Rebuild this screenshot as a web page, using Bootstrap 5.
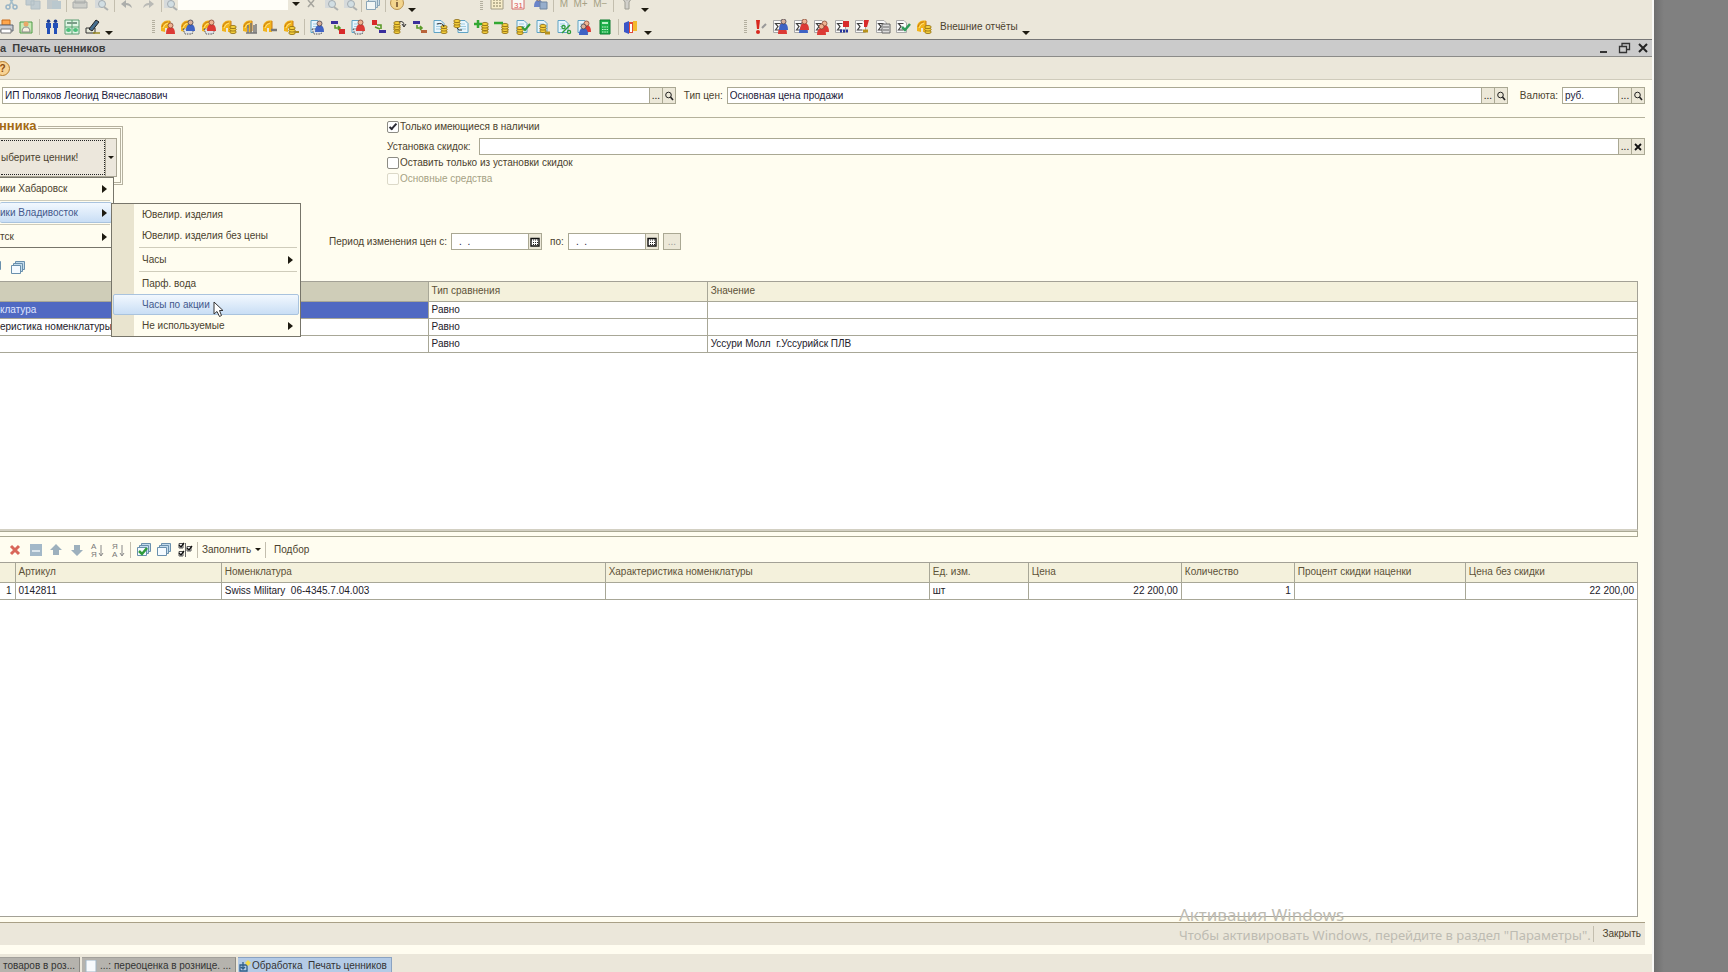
<!DOCTYPE html>
<html lang="ru">
<head>
<meta charset="utf-8">
<meta name="viewport" content="width=device-width, initial-scale=1">
<title>Печать ценников</title>
<link href="https://cdn.jsdelivr.net/npm/bootstrap@5.3.0/dist/css/bootstrap.min.css" rel="stylesheet">
<style>
:root{--cream:#fffdf0;--panel:#ebe7da;--line:#aaa893;--ink:#4b422e}
body{font-family:"Liberation Sans",Arial,sans-serif;font-size:10px;line-height:16px;color:var(--ink);background:#808080}
button,input{font:inherit;color:inherit}
.app{min-height:100vh;overflow:hidden}
.work{background:var(--cream);border-right:2px solid #f8f8f6;min-width:0}
.desk{flex:0 0 74px;background:linear-gradient(90deg,#6f6f6f,#808080 10px)}
.tb{background:var(--panel)}
.tb-top{height:14px}
.tb-top .ico{opacity:.75}
.tb-main{height:25px}
.tb-top .grp{height:8px;line-height:8px}
.grp{display:flex;align-items:center;justify-content:space-between;flex:none}
.g-edit{width:162px}.g-find{width:124px}.g-calc{width:169px;margin-left:64px}
.g-ops{width:115px;margin-left:-2px}.g-docs{width:500px;margin-left:39px}.g-rep{width:188px;margin-left:92px}
.g-rows{width:186px;margin-left:7px}
.ico{width:16px;height:16px;display:block;flex:none}
.find-ico{margin-top:-4px}
.tool{border:0;background:none;padding:0;line-height:16px;flex:none;display:block}
.vsep{width:1px;height:16px;background:#c3beae;flex:none}
.grip{width:3px;height:14px;background:repeating-linear-gradient(#b3af9f 0 1px,transparent 1px 2px);flex:none}
.caret{width:0;height:0;border:4px solid transparent;border-top-color:#1d1a10;border-bottom:0;flex:none}
.caret-s{border-width:3px 3px 0}
.low{margin-top:12px}
.find-box{width:110px;height:10px;border:0;background:#fffef8;padding:0 4px}
.titlebar{height:18px;background:#cbcbcb;border-top:1px solid #777;border-bottom:1px solid #8b8b88;font-size:11px;font-weight:bold;color:#3c3c3c}
.subbar{height:23px;border-bottom:1px solid #cfcbbb}
.help{width:15px;height:15px;border-radius:50%;border:1px solid #b77d2c;background:#f8d394;color:#8a4a10;font-weight:bold;line-height:13px;margin-left:-5px}
.heads{padding:7px 7px 0 2px}
.fld{height:17px;border:1px solid var(--line);background:#fff;min-width:0;padding:0 2px;color:#20203a;border-radius:0}
.f-org{flex:646 1 0}.f-type{flex:754 1 0}.f-cur{width:57px}
.fbtn{width:13px;height:17px;border:1px solid var(--line);border-left:0;background:#ece8d8;padding:0;color:#111;display:flex;align-items:center;justify-content:center;flex:none;line-height:12px}
.fbtn svg{width:10px;height:10px}
.fbtn.alone{width:18px;color:#999;border-left:1px solid var(--line)}
.rule{height:1px;background:#b5b29c;margin:13px 7px 0 0}
.opts{height:115px}
.rightcol{padding:1px 7px 0 0}
.leftcol{width:387px;flex:none;position:relative}
.frame{position:relative;width:123px;height:59px;margin-top:8px;border:3px double #b5b19f;border-left:0}
.frame-title{position:absolute;top:-11px;left:-1px;background:var(--cream);color:#a36a14;font-weight:bold;font-size:13px;padding-right:2px}
.pick{position:absolute;left:0;top:9px;width:106px;height:39px;background:#ece7dc;border:1px solid #a9a594;border-left:0;padding:1px}
.pick span{display:block;height:35px;width:104px;border:1px dotted #222;border-left:0;text-align:left;line-height:33px}
.drop{position:absolute;left:106px;top:9px;width:11px;height:39px;background:#ece7dc;border:1px solid #a9a594;border-left:0;padding:0}
.menu{position:absolute;background:var(--cream);border:1px solid #77756a;z-index:5;padding:0 1px}
.menu-a{left:0;top:59px;width:114px;border-left:0;padding-left:0}
.menu-b{left:111px;top:85px;width:190px;background:linear-gradient(90deg,#e9e4cf 22px,var(--cream) 22px)}
.mi{display:flex;align-items:center;justify-content:space-between;width:100%;border:1px solid transparent;background:none;height:21px;padding:0 5px 0 28px;text-align:left;border-radius:2px}
.menu-a .mi{padding:0 4px 0 0;border-left:0}
.mi.hot{background:linear-gradient(#f2f8fe,#c9def5);border-color:#a9c3de;color:#44598c}
.mi i{width:0;height:0;border:4px solid transparent;border-left:5px solid #1d1a10;border-right:0}
.msep{height:1px;background:#cfccbb;margin:1px 2px 1px 26px}
.menu-a .msep{margin-left:0}
.tick{appearance:none;width:12px;height:12px;border:1px solid #8d8c84;background:#fff;border-radius:2px;margin:0;display:grid;place-items:center;flex:none}
.tick:checked::after{content:"";width:8px;height:4px;border:solid #2b2b33;border-width:0 0 2px 2px;rotate:-48deg;margin-top:-3px}
.tick:disabled{border-color:#dcd9c8;background:#fffef6}
.opt{display:flex;align-items:center;gap:1px;height:16px}
.disc-row{margin-top:3px}
.dim{color:#a5a184}
.period{padding-left:329px}
.date{width:78px;padding-left:7px}
.views{height:31px}
.views .ico:first-child{margin-left:-14px}
.grid-wrap{margin-right:14px;border:1px solid #a3a196;border-left:0;background:#fff}
.grid1{height:250px;border-bottom:2px solid #d3d0c3}
.gridt{width:100%;table-layout:fixed;border-collapse:collapse;margin:0;color:#22202a}
.gridt th,.gridt td{border:1px solid #a8a797;border-top:0;padding:0 3px;height:17px;line-height:16px;white-space:nowrap;overflow:hidden}
.gridt tr>:first-child{border-left:0;padding-left:0}
.gridt tr>:last-child{border-right:0}
.gridt th{background:#f4f1dc;color:#5d5238;font-weight:normal;height:19px;line-height:18px}
.gridt th.cur{background:#cfcdb8}
.gridt td.sel{background:#5069c2;color:#dfe4ff}
.c-f{width:26.15%}.c-t{width:17.05%}
.k-n{width:15px}.k-a{width:12.6%}.k-m{width:23.45%}.k-h{width:19.8%}.k-e{width:6.05%}.k-p{width:9.35%}.k-q{width:6.9%}.k-d{width:10.45%}
.split{height:6px;margin-right:14px;border:1px solid var(--line);border-left:0}
.cmds{height:25px}
.footbar{height:23px;margin:5px 7px 0 0;border-top:1px solid #a9a086;background:var(--panel)}
.tasks{height:18px;margin-top:9px;background:var(--panel);padding-top:3px}
.task{height:16px;border:0;background:#b5b3ad;padding:0 4px 0 3px;display:flex;align-items:center;gap:3px;border-right:1px solid #8e8c86;border-top:1px solid #a2a09a;color:#333;margin-right:2px;white-space:nowrap}
.task.on{background:#b4cbe6;border-color:#8aa3c2;gap:1px;padding-left:1px}
.task svg{width:12px;height:12px}
.mark-win{position:absolute;right:64px;bottom:27px;width:409px;font-family:"Noto Sans","Open Sans",sans-serif;font-size:13px;line-height:20px;color:#bdbbb2;pointer-events:none;white-space:nowrap}
.mark-win b{display:block;font-size:17px;font-weight:normal}
.cursor{position:absolute;left:213px;top:183px;width:12px;height:17px;z-index:6}
</style>
</head>
<body>
<svg width="0" height="0" class="position-absolute" aria-hidden="true">
  <defs>
    <symbol id="gold" viewBox="0 0 16 16"><path d="M1 12V7Q2 2 7 1.500H10V13H7V9H5V13Z" fill="#f2b41c"/><path d="M2 8Q3 3 8 3M10 2V12" stroke="#c97a12" fill="none"/><path d="M3 9Q4 5 8 4" stroke="#ffe680" fill="none"/></symbol>
    <symbol id="doc" viewBox="0 0 16 16"><path d="M2 1.500H9L12 4.500V13.500H2Z" fill="#e9f6fd" stroke="#5fa3c4"/><path d="M4 5H9M4 7.500H10M4 10H10" stroke="#9fcbe0"/></symbol>
    <symbol id="sig" viewBox="0 0 16 16"><path d="M1.500 1.500H9L11.500 4V13.500H1.500Z" fill="#fafafa" stroke="#a8a8a8"/><path d="M8.500 4.500H3.500L6 7.500L3.500 11H8.500" fill="none" stroke="#444" stroke-width="1.200"/></symbol>
    <symbol id="coins" viewBox="0 0 16 16"><g fill="#f5cf3c" stroke="#8b6910" stroke-width=".8"><ellipse cx="8" cy="13" rx="3.200" ry="1.600"/><ellipse cx="8" cy="10.500" rx="3.200" ry="1.600"/><ellipse cx="8" cy="8" rx="3.200" ry="1.600"/></g></symbol>
    <symbol id="manr" viewBox="0 0 16 16"><path d="M6 15Q6 8 10.500 8T15 15Z" fill="#dc3a35"/><circle cx="10.500" cy="6.500" r="2.500" fill="#efb392" stroke="#7a3a2a" stroke-width=".7"/></symbol>
    <symbol id="manb" viewBox="0 0 16 16"><path d="M6 14Q6 7 10.500 7T15 14Z" fill="#3f63c4"/><circle cx="10.500" cy="5.500" r="2.500" fill="#d9b09a" stroke="#334" stroke-width=".7"/></symbol>
    <symbol id="basket" viewBox="0 0 16 16"><path d="M3 10H14L12 15H5Z" fill="#dfe3e8" stroke="#555" stroke-dasharray="1.500 1"/></symbol>
    <symbol id="flow" viewBox="0 0 16 16"><path d="M1 2H8V5H1Z" fill="#3b2f9c"/><path d="M5 6V9H10M8 7L10 9L8 11" fill="none" stroke="#5a9a28" stroke-width="1.600"/></symbol>
    <symbol id="find" viewBox="0 0 10 10"><circle cx="4.500" cy="4" r="2.800" fill="none" stroke="#222"/><path d="M6.500 6L9 9" stroke="#222" stroke-width="1.600"/></symbol>
    <symbol id="cal" viewBox="0 0 10 10"><path d="M1 1.500H9V9H1Z" fill="#fff" stroke="#111" stroke-width="1.400"/><path d="M1 3H9M3 5.500H8M3 7.500H8" stroke="#222" stroke-dasharray="1 1"/></symbol>
    <symbol id="stack" viewBox="0 0 16 16"><g fill="#c3dcec" stroke="#6a90ad"><path d="M5.500 1.500H14.500V9.500H5.500Z"/><path d="M3.500 3.500H12.500V11.500H3.500Z"/><path d="M1.500 5.500H10.500V13.500H1.500Z" fill="#f5fbff"/></g></symbol>
    <symbol id="loupe" viewBox="0 0 16 16"><path d="M2 2H10V12H2Z" fill="#cfd6dc"/><circle cx="9" cy="8" r="3.500" fill="#c9dbe6" stroke="#8d9aa4"/><path d="M11 11L15 14" stroke="#9aa0a4" stroke-width="2"/></symbol>
  </defs>
</svg>

<div class="app d-flex">
<main class="work flex-grow-1 d-flex flex-column position-relative">

  <!-- Standard toolbar, scrolled partly above the window edge -->
  <div class="tb tb-top d-flex align-items-start">
    <div class="grp g-edit">
      <svg class="ico ms-1" viewBox="0 0 16 16"><path d="M4 0L10 10M11 0L5 10" stroke="#8db0c4" stroke-width="1.500"/><circle cx="4" cy="11" r="2" fill="none" stroke="#7fa5c0" stroke-width="1.500"/><circle cx="11" cy="11" r="2" fill="none" stroke="#7fa5c0" stroke-width="1.500"/></svg>
      <svg class="ico" viewBox="0 0 16 16"><path d="M1 1H9V9H1ZM6 5H15V13H6Z" fill="#b3c3ce" stroke="#9fb1bd"/></svg>
      <svg class="ico" viewBox="0 0 16 16"><path d="M1 2H12V13H1Z" fill="#b5c0c6"/><path d="M6 5H15V13H6Z" fill="#aabecb"/></svg>
      <span class="vsep"></span>
      <svg class="ico" viewBox="0 0 16 16"><path d="M3 3H13V7H3ZM1 6H15V12H1Z" fill="#c4c6c4" stroke="#93999b"/></svg>
      <svg class="ico"><use href="#loupe"/></svg>
      <span class="vsep"></span>
      <svg class="ico" viewBox="0 0 16 16"><path d="M2 8L7 4V7Q12 7 13 12Q10 9 7 9V12Z" fill="#979b9c"/></svg>
      <svg class="ico" viewBox="0 0 16 16"><path d="M14 8L9 4V7Q4 7 3 12Q6 9 9 9V12Z" fill="#a9abaa"/></svg>
      <span class="vsep"></span>
    </div>
    <svg class="ico find-ico"><use href="#loupe"/></svg>
    <input class="find-box" aria-label="Поиск">
    <div class="grp g-find ms-1">
      <span class="caret"></span>
      <svg class="ico" viewBox="0 0 16 16"><path d="M5 4L11 11M11 4L5 11" stroke="#8f8f8a" stroke-width="1.500"/></svg>
      <svg class="ico"><use href="#loupe"/></svg>
      <svg class="ico"><use href="#loupe"/></svg>
      <span class="vsep"></span>
      <svg class="ico"><use href="#stack"/></svg>
      <span class="vsep"></span>
      <svg class="ico" viewBox="0 0 16 16"><circle cx="8" cy="7" r="6.500" fill="#f6cf74" stroke="#a8761f"/><path d="M8 3V4.500M8 6V11" stroke="#6c4410" stroke-width="2"/></svg>
      <span class="caret low"></span>
    </div>
    <div class="grp g-calc">
      <span class="grip"></span>
      <svg class="ico" viewBox="0 0 16 16"><path d="M2 1H14V13H2Z" fill="#fbf0c4" stroke="#8a8468"/><path d="M4 4H12M4 7H12M4 10H12" stroke="#5d5430" stroke-dasharray="2 1"/></svg>
      <svg class="ico" viewBox="0 0 16 16"><path d="M2 0H14V13H2Z" fill="#fff" stroke="#c44"/><text x="4" y="12" font-size="8" fill="#d22">31</text></svg>
      <svg class="ico" viewBox="0 0 16 16"><use href="#manb" x="-4" y="-3"/><path d="M8 6H15V13H8Z" fill="#7a9cc8" stroke="#47668f"/></svg>
      <span class="vsep"></span>
      <span class="dim">M</span><span class="dim">M+</span><span class="dim">M−</span>
      <span class="vsep"></span>
      <svg class="ico" viewBox="0 0 16 16"><path d="M3 2L6 6V13H10V6L13 2L8 4Z" fill="#c9c9c6" stroke="#85857f"/></svg>
      <span class="caret low"></span>
    </div>
  </div>

  <!-- Main toolbar -->
  <div class="tb tb-main d-flex align-items-center">
    <div class="grp g-ops">
      <svg class="ico" viewBox="0 0 16 16"><path d="M4 1H12V6H4Z" fill="#ffa64b" stroke="#c86a1a"/><path d="M1 6H15V12H1Z" fill="#c9cdd4" stroke="#5d6470"/><path d="M3 10H13V14H3Z" fill="#fff" stroke="#777"/></svg>
      <svg class="ico" viewBox="0 0 16 16"><path d="M2 3H14V14H2Z" fill="#c9eab8" stroke="#4f9a46"/><circle cx="8" cy="5" r="2.500" fill="#e9a868"/><path d="M4 13Q4 8 8 8T12 13Z" fill="#f5f0e0" stroke="#888"/></svg>
      <span class="vsep"></span>
      <svg class="ico" viewBox="0 0 16 16"><path d="M2 4H7V9H6V15H3V9H2ZM9 4H14V9H13V15H10V9H9Z" fill="#2350b8"/><circle cx="4.500" cy="2.300" r="1.800" fill="#1c3c90"/><circle cx="11.500" cy="2.300" r="1.800" fill="#1c3c90"/></svg>
      <svg class="ico" viewBox="0 0 16 16"><path d="M1 1H15V15H1Z" fill="#dff5e4" stroke="#5a9c72"/><path d="M1 8H15M8 1V15" stroke="#55a06c"/><path d="M3 3H13V5H3Z" fill="#7a9c88"/><ellipse cx="4.500" cy="11" rx="2.500" ry="2" fill="#4cc07a"/><ellipse cx="11.500" cy="11" rx="2.500" ry="2" fill="#4cc07a"/></svg>
      <svg class="ico" viewBox="0 0 16 16"><path d="M1 9H10V14H1Z" fill="#e5e8d8" stroke="#333"/><path d="M4 10L11 1L14 3L7 12Z" fill="#476f8f" stroke="#222"/><path d="M8 14H15" stroke="#998a20" stroke-width="1.500"/></svg>
      <span class="caret low"></span>
    </div>
    <div class="grp g-docs">
      <span class="grip"></span>
      <svg class="ico"><use href="#gold"/><use href="#manr"/></svg>
      <svg class="ico"><use href="#gold"/><use href="#basket"/><use href="#manb" y="-2"/></svg>
      <svg class="ico"><use href="#gold"/><use href="#basket"/><use href="#manr" y="-3"/></svg>
      <svg class="ico"><use href="#gold"/><use href="#coins" x="4"/></svg>
      <svg class="ico" viewBox="0 0 16 16"><use href="#gold"/><path d="M6 6V14M9 4V14M12 6V14M14 5V14M4 14H15" stroke="#777" stroke-width="1.500"/></svg>
      <svg class="ico" viewBox="0 0 16 16"><use href="#gold"/><path d="M9 11H15" stroke="#777" stroke-width="2.500"/></svg>
      <svg class="ico" viewBox="0 0 16 16"><use href="#gold"/><use href="#coins" x="1" y="1"/><path d="M12 13H16" stroke="#a88a20" stroke-width="2"/></svg>
      <span class="vsep"></span>
      <svg class="ico"><use href="#doc"/><use href="#basket"/><use href="#manb" y="-1"/></svg>
      <svg class="ico" viewBox="0 0 16 16"><use href="#flow"/><path d="M9 10H15V15H9Z" fill="#d82a2a"/></svg>
      <svg class="ico"><use href="#doc"/><use href="#basket"/><use href="#manr" y="-3"/></svg>
      <svg class="ico" viewBox="0 0 16 16"><path d="M1 1H6V6H1Z" fill="#d82a2a"/><path d="M6 6H10V10M4 8L9 10" stroke="#5a9a28" stroke-width="1.600" fill="none"/><path d="M8 11H15V14H8Z" fill="#3b2f9c"/></svg>
      <svg class="ico" viewBox="0 0 16 16"><use href="#coins" x="-2"/><use href="#coins" x="-2" y="-4"/><path d="M8 3Q13 1 13 7M11 5L13 8L15 5" fill="none" stroke="#333"/></svg>
      <svg class="ico" viewBox="0 0 16 16"><use href="#flow"/><path d="M9 11H15V14H9Z" fill="#b8643a"/></svg>
      <svg class="ico" viewBox="0 0 16 16"><use href="#doc"/><use href="#coins" x="4"/><path d="M5 5Q11 3 12 8" fill="none" stroke="#333"/></svg>
      <svg class="ico" viewBox="0 0 16 16"><use href="#doc" x="3"/><use href="#coins" x="-4" y="-6"/><path d="M4 9Q5 12 9 11" fill="none" stroke="#333"/></svg>
      <svg class="ico" viewBox="0 0 16 16"><use href="#coins" x="3"/><use href="#coins" x="3" y="-3"/><path d="M4 1V9M0 5H8" stroke="#32a832" stroke-width="2.500"/></svg>
      <svg class="ico" viewBox="0 0 16 16"><use href="#coins" x="3"/><use href="#coins" x="3" y="-2"/><path d="M0 4H9" stroke="#32a832" stroke-width="2.500"/></svg>
      <svg class="ico" viewBox="0 0 16 16"><use href="#doc"/><use href="#coins" x="-3" y="1"/><path d="M7 8L10 11L15 5" fill="none" stroke="#2f9c3a" stroke-width="2"/></svg>
      <svg class="ico" viewBox="0 0 16 16"><use href="#doc"/><use href="#coins" y="-1"/><path d="M10 14H15" stroke="#b8921c" stroke-width="3"/></svg>
      <svg class="ico" viewBox="0 0 16 16"><use href="#doc"/><path d="M6 14L14 6" stroke="#2f9c3a" stroke-width="1.500"/><circle cx="7.500" cy="8" r="1.600" fill="none" stroke="#2f9c3a" stroke-width="1.300"/><circle cx="13" cy="13" r="1.600" fill="none" stroke="#2f9c3a" stroke-width="1.300"/></svg>
      <svg class="ico"><use href="#doc"/><use href="#manr" y="-2"/><use href="#manb" x="-3" y="2"/></svg>
      <svg class="ico" viewBox="0 0 16 16"><path d="M3 1H13V15H3Z" fill="#1fb04a" stroke="#0f7a30"/><path d="M5 3H11V5H5Z" fill="#b8f0c4"/><path d="M5 8H11M5 10.500H11M5 13H11" stroke="#c9f5d2" stroke-dasharray="1.500 .8"/></svg>
      <span class="vsep"></span>
      <svg class="ico" viewBox="0 0 16 16"><path d="M1 4L6 2V15L1 13Z" fill="#3a55c8"/><path d="M6 3H10V14H6Z" fill="#e04a3a"/><path d="M10 2H14V12H10Z" fill="#f4b92c"/><path d="M7 5H9V13H7Z" fill="#fff"/></svg>
      <span class="caret low"></span>
    </div>
    <div class="grp g-rep">
      <span class="grip"></span>
      <svg class="ico" viewBox="0 0 16 16"><path d="M4 1H8L7 10H5Z" fill="#d8281e"/><circle cx="6" cy="13" r="2" fill="#d8281e"/><path d="M10 9L14 5" stroke="#999" stroke-width="2"/></svg>
      <svg class="ico"><use href="#sig"/><use href="#manr"/><use href="#manb" x="1" y="-3"/></svg>
      <svg class="ico"><use href="#sig"/><use href="#manb"/><use href="#manr" x="1" y="-4"/></svg>
      <svg class="ico"><use href="#sig"/><use href="#manr" x="1" y="-2"/><use href="#manr" x="-2" y="1"/></svg>
      <svg class="ico" viewBox="0 0 16 16"><use href="#sig"/><path d="M9 2H15V8H9Z" fill="#d82a2a"/><path d="M6 12H15" stroke="#26349c" stroke-width="3" stroke-dasharray="2 1"/></svg>
      <svg class="ico" viewBox="0 0 16 16"><use href="#sig"/><path d="M10 1H15L13 8H10Z" fill="#d82a2a"/><path d="M9 12H14" stroke="#b8921c" stroke-width="3"/></svg>
      <svg class="ico" viewBox="0 0 16 16"><use href="#sig"/><path d="M7 5H15V14H7Z" fill="#ddd" stroke="#666"/><path d="M8 8H14M8 11H14" stroke="#666"/></svg>
      <svg class="ico" viewBox="0 0 16 16"><use href="#sig"/><path d="M7 8L10 11L15 5" fill="none" stroke="#2f9c5a" stroke-width="2.500"/></svg>
      <svg class="ico"><use href="#gold"/><use href="#coins" x="4"/></svg>
    </div>
    <button class="tool ms-2">Внешние отчёты</button>
    <span class="caret low ms-1"></span>
  </div>

  <div class="titlebar d-flex align-items-center justify-content-between">
    <span style="white-space:pre">а  Печать ценников</span>
    <span class="d-flex gap-1">
      <button class="tool" aria-label="Свернуть"><svg class="ico" viewBox="0 0 16 16"><path d="M4 12H11" stroke="#333" stroke-width="2"/></svg></button>
      <button class="tool" aria-label="Восстановить"><svg class="ico" viewBox="0 0 16 16"><path d="M6 6V3.500H13.500V9.500H11M3.500 6.500H10.500V12.500H3.500Z" fill="none" stroke="#333" stroke-width="1.300"/></svg></button>
      <button class="tool" aria-label="Закрыть окно"><svg class="ico" viewBox="0 0 16 16"><path d="M3 4L11 12M11 4L3 12" stroke="#222" stroke-width="2"/></svg></button>
    </span>
  </div>
  <div class="tb subbar d-flex align-items-center"><button class="help p-0" aria-label="Справка">?</button></div>

  <!-- Header fields -->
  <div class="heads d-flex align-items-center">
    <input class="fld f-org" value="ИП Поляков Леонид Вячеславович" aria-label="Организация">
    <button class="fbtn">...</button><button class="fbtn" aria-label="Найти"><svg><use href="#find"/></svg></button>
    <label for="ptype" class="ms-2 me-1">Тип цен:</label>
    <input id="ptype" class="fld f-type" value="Основная цена продажи">
    <button class="fbtn">...</button><button class="fbtn" aria-label="Найти"><svg><use href="#find"/></svg></button>
    <label for="cur" class="ms-2 me-1 ps-1">Валюта:</label>
    <input id="cur" class="fld f-cur" value="руб.">
    <button class="fbtn">...</button><button class="fbtn" aria-label="Найти"><svg><use href="#find"/></svg></button>
  </div>
  <div class="rule"></div>

  <div class="opts d-flex">
    <div class="leftcol">
      <div class="frame">
        <span class="frame-title">нника</span>
        <button class="pick"><span>ыберите ценник!</span></button>
        <button class="drop d-flex align-items-center justify-content-center" aria-label="Список"><span class="caret caret-s"></span></button>
      </div>
      <div class="menu menu-a">
        <button class="mi">ики Хабаровск<i></i></button>
        <div class="msep"></div>
        <button class="mi hot">ики Владивосток<i></i></button>
        <div class="msep"></div>
        <button class="mi">тск<i></i></button>
      </div>
      <div class="menu menu-b">
        <button class="mi">Ювелир. изделия</button>
        <button class="mi">Ювелир. изделия без цены</button>
        <div class="msep"></div>
        <button class="mi">Часы<i></i></button>
        <div class="msep"></div>
        <button class="mi">Парф. вода</button>
        <button class="mi hot">Часы по акции</button>
        <button class="mi">Не используемые<i></i></button>
      </div>
      <svg class="cursor" viewBox="0 0 12 17"><path d="M1 1V13L4 10.500L6.500 15.500L8.500 14.500L6.500 9.500H10Z" fill="#fff" stroke="#333"/></svg>
    </div>
    <div class="rightcol flex-grow-1">
      <label class="opt"><input type="checkbox" class="tick" checked>Только имеющиеся в наличии</label>
      <div class="disc-row d-flex align-items-center">
        <label for="disc" class="me-2">Установка скидок:</label>
        <input id="disc" class="fld flex-grow-1">
        <button class="fbtn">...</button><button class="fbtn" aria-label="Очистить"><svg viewBox="0 0 10 10"><path d="M2 2L8 8M8 2L2 8" stroke="#111" stroke-width="1.800"/></svg></button>
      </div>
      <label class="opt"><input type="checkbox" class="tick">Оставить только из установки скидок</label>
      <label class="opt dim"><input type="checkbox" class="tick" disabled>Основные средства</label>
    </div>
  </div>

  <div class="period d-flex align-items-center">
    <label for="d1" class="me-1">Период изменения цен с:</label>
    <input id="d1" class="fld date" value=".  ."><button class="fbtn" aria-label="Календарь"><svg><use href="#cal"/></svg></button>
    <label for="d2" class="ms-2 me-1">по:</label>
    <input id="d2" class="fld date" value=".  ."><button class="fbtn" aria-label="Календарь"><svg><use href="#cal"/></svg></button>
    <button class="fbtn alone ms-1">...</button>
  </div>

  <div class="views d-flex align-items-center gap-2 pt-1">
    <svg class="ico"><use href="#stack"/></svg>
    <svg class="ico"><use href="#stack"/></svg>
  </div>

  <!-- Filter table -->
  <div class="grid-wrap grid1">
    <table class="gridt">
      <colgroup><col class="c-f"><col class="c-t"><col></colgroup>
      <thead><tr><th class="cur"></th><th>Тип сравнения</th><th>Значение</th></tr></thead>
      <tbody>
        <tr><td class="sel">клатура</td><td>Равно</td><td></td></tr>
        <tr><td>еристика номенклатуры</td><td>Равно</td><td></td></tr>
        <tr><td></td><td>Равно</td><td>Уссури Молл&nbsp; г.Уссурийск ПЛВ</td></tr>
      </tbody>
    </table>
  </div>
  <div class="split"></div>

  <div class="cmds d-flex align-items-center">
    <div class="grp g-rows">
      <svg class="ico" viewBox="0 0 16 16"><path d="M4 4L12 12M12 4L4 12" stroke="#d8665a" stroke-width="3"/></svg>
      <svg class="ico" viewBox="0 0 16 16"><path d="M2 2H14V14H2Z" fill="#a3b8c8"/><path d="M4 9H12" stroke="#dbe5ec" stroke-width="2"/></svg>
      <svg class="ico" viewBox="0 0 16 16"><path d="M8 2L14 8H11V13H5V8H2Z" fill="#9db0bd"/></svg>
      <svg class="ico" viewBox="0 0 16 16"><path d="M8 14L14 8H11V3H5V8H2Z" fill="#9db0bd"/></svg>
      <svg class="ico" viewBox="0 0 16 16"><text x="2" y="7" font-size="8" fill="#777">А</text><text x="2" y="15" font-size="8" fill="#777">Я</text><path d="M12 3V13M10 11L12 14L14 11" fill="none" stroke="#888"/></svg>
      <svg class="ico" viewBox="0 0 16 16"><text x="2" y="7" font-size="8" fill="#777">Я</text><text x="2" y="15" font-size="8" fill="#777">А</text><path d="M12 3V13M10 11L12 14L14 11" fill="none" stroke="#888"/></svg>
      <span class="vsep"></span>
      <svg class="ico" viewBox="0 0 16 16"><use href="#stack"/><path d="M3 9L6 12L11 6" fill="none" stroke="#2f9c3a" stroke-width="2.500"/></svg>
      <svg class="ico"><use href="#stack"/></svg>
      <svg class="ico" viewBox="0 0 16 16"><path d="M2 1.500H6V6H2ZM2 9.500H6V14H2ZM10 4.500H14V9H10Z" fill="#fff" stroke="#555"/><path d="M8.500 1V15" stroke="#666"/><path d="M2 3L4 5L7 1M2 11L4 13L7 9M10 6L12 8L15 4" fill="none" stroke="#111" stroke-width="1.300"/></svg>
    </div>
    <span class="vsep ms-1"></span>
    <button class="tool ms-1 d-flex align-items-center gap-1">Заполнить<span class="caret caret-s"></span></button>
    <span class="vsep mx-1"></span>
    <button class="tool ms-1">Подбор</button>
  </div>

  <!-- Goods table -->
  <div class="grid-wrap flex-grow-1">
    <table class="gridt">
      <colgroup><col class="k-n"><col class="k-a"><col class="k-m"><col class="k-h"><col class="k-e"><col class="k-p"><col class="k-q"><col class="k-d"><col></colgroup>
      <thead><tr><th></th><th>Артикул</th><th>Номенклатура</th><th>Характеристика номенклатуры</th><th>Ед. изм.</th><th>Цена</th><th>Количество</th><th>Процент скидки наценки</th><th>Цена без скидки</th></tr></thead>
      <tbody><tr><td class="text-end">1</td><td>0142811</td><td>Swiss Military&nbsp; 06-4345.7.04.003</td><td></td><td>шт</td><td class="text-end">22 200,00</td><td class="text-end">1</td><td></td><td class="text-end">22 200,00</td></tr></tbody>
    </table>
  </div>

  <div class="footbar d-flex align-items-center justify-content-end">
    <span class="vsep me-1"></span><button class="tool px-1">Закрыть</button>
  </div>

  <div class="tasks d-flex overflow-hidden">
    <button class="task">товаров в роз...</button>
    <button class="task"><svg viewBox="0 0 12 12"><path d="M1 0H11V12H1Z" fill="#f7fafc" stroke="#9fb4c4"/></svg>...: переоценка в рознице. ...</button>
    <button class="task on"><svg viewBox="0 0 12 12"><path d="M1 5H8V11H1ZM4 2V9M2 7L4 9L6 7" fill="none" stroke="#2f5f88" stroke-width="1.300"/><path d="M9 0L12 3L9 6L6 3Z" fill="#f1dc4c"/></svg>Обработка&nbsp; Печать ценников</button>
  </div>

  <div class="mark-win"><b>Активация Windows</b>Чтобы активировать Windows, перейдите в раздел "Параметры".</div>
</main>
<aside class="desk" aria-hidden="true"></aside>
</div>
<script src="https://cdn.jsdelivr.net/npm/bootstrap@5.3.0/dist/js/bootstrap.bundle.min.js"></script>
</body>
</html>
